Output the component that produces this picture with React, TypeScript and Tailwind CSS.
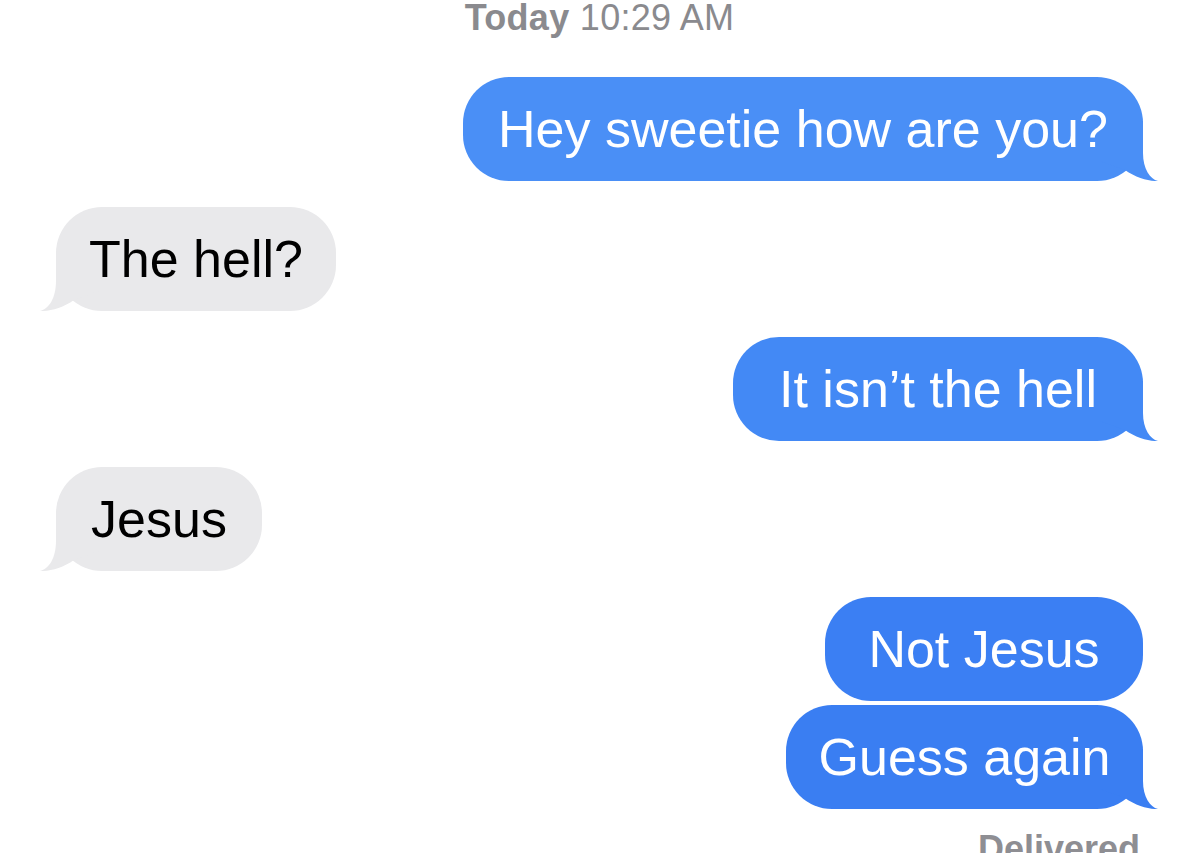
import React from "react";

type Message = {
  text: string;
  from: "me" | "them";
  tail: boolean;
  bg: string;
  fill: string;
  mt: string;
  w: string;
};

const messages: Message[] = [
  { text: "Hey sweetie how are you?", from: "me", tail: true, bg: "bg-[#4a8ff6]", fill: "fill-[#4a8ff6]", mt: "mt-[41px]", w: "w-[680px]" },
  { text: "The hell?", from: "them", tail: true, bg: "bg-[#e9e9eb]", fill: "fill-[#e9e9eb]", mt: "mt-[26px]", w: "w-[280px]" },
  { text: "It isn\u2019t the hell", from: "me", tail: true, bg: "bg-[#4389f5]", fill: "fill-[#4389f5]", mt: "mt-[26px]", w: "w-[410px]" },
  { text: "Jesus", from: "them", tail: true, bg: "bg-[#e9e9eb]", fill: "fill-[#e9e9eb]", mt: "mt-[26px]", w: "w-[206px]" },
  { text: "Not Jesus", from: "me", tail: false, bg: "bg-[#3b7ff3]", fill: "fill-[#3b7ff3]", mt: "mt-[26px]", w: "w-[318px]" },
  { text: "Guess again", from: "me", tail: true, bg: "bg-[#3a7ef2]", fill: "fill-[#3a7ef2]", mt: "mt-[4px]", w: "w-[357px]" },
];

function Tail({ side, fill }: { side: "me" | "them"; fill: string }) {
  if (side === "me") {
    return (
      <svg
        viewBox="0 0 60 60"
        className={`absolute bottom-0 right-[-17px] h-[60px] w-[60px] ${fill}`}
      >
        <path d="M43 0 L43 32 C43 48 50 58 58 60 C50 60.5 36 57 25 49 L0 40 L0 0 Z" />
      </svg>
    );
  }
  return (
    <svg
      viewBox="0 0 60 60"
      className={`absolute bottom-0 left-[-17px] h-[60px] w-[60px] ${fill}`}
    >
      <path d="M17 0 L17 30 C17 47 10 58 1 60 C10 60.5 24 57 35 49 L60 40 L60 0 Z" />
    </svg>
  );
}

function Bubble({ msg }: { msg: Message }) {
  const mine = msg.from === "me";
  return (
    <div
      className={`relative flex justify-center ${msg.mt} ${msg.w} ${mine ? "self-end text-white" : "self-start text-black"} ${msg.bg} rounded-[46px] py-[21px]`}
    >
      {msg.tail && <Tail side={msg.from} fill={msg.fill} />}
      <span className="relative whitespace-nowrap text-[52px] leading-[62px]">
        {msg.text}
      </span>
    </div>
  );
}

export default function App() {
  return (
    <div
      className="h-[853px] w-full overflow-hidden bg-white"
      style={{ fontFamily: '"Liberation Sans", Arial, sans-serif' }}
    >
      <div className="flex flex-col pl-[56px] pr-[57px]">
        <div className="text-center text-[36px] leading-none tracking-[0.3px] text-[#8a8a8e]">
          <span className="font-semibold">Today</span> 10:29 AM
        </div>

        {messages.map((m) => (
          <Bubble key={m.text} msg={m} />
        ))}

        <div className="mt-[22px] self-end pr-[3px] text-[36px] font-semibold leading-none text-[#8e8e93]">
          Delivered
        </div>
      </div>
    </div>
  );
}
